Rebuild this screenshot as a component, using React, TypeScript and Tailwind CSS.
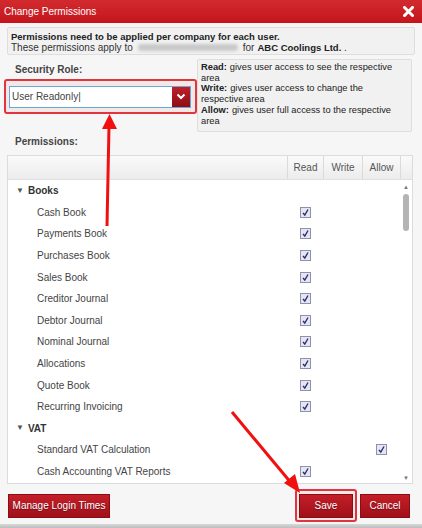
import React from "react";

const books = [
  "Cash Book",
  "Payments Book",
  "Purchases Book",
  "Sales Book",
  "Creditor Journal",
  "Debtor Journal",
  "Nominal Journal",
  "Allocations",
  "Quote Book",
  "Recurring Invoicing",
];

function Check() {
  return (
    <span className="inline-flex w-[11px] h-[11px] border border-[#8f8fae] bg-[#e6e6f2] items-center justify-center">
      <svg width="9" height="9" viewBox="0 0 9 9">
        <path d="M2 5 L3.8 7 L7 1.5" stroke="#2a2f6e" strokeWidth="1.4" fill="none" />
      </svg>
    </span>
  );
}

function Row({ label, col }: { label: string; col: "read" | "allow" }) {
  return (
    <div className="flex h-[21.6px] items-center">
      <div className="w-[279px] pl-[29px] text-[10px] text-[#444]">{label}</div>
      <div className="w-[36px] flex justify-center">{col === "read" ? <Check /> : null}</div>
      <div className="w-[39px]" />
      <div className="w-[38px] flex justify-center">{col === "allow" ? <Check /> : null}</div>
    </div>
  );
}

function Group({ label }: { label: string }) {
  return (
    <div className="flex h-[21.6px] items-center pl-[8px] text-[10px] font-bold text-[#333]">
      <span className="text-[8px] mr-[4px] text-[#555]">▼</span>
      {label}
    </div>
  );
}

function Desc({ term, first, second }: { term: string; first: string; second: string }) {
  return (
    <>
      <div className="flex gap-[3px]">
        <b>{term}</b>
        <span>{first}</span>
      </div>
      <div>{second}</div>
    </>
  );
}

export default function App() {
  return (
    <div className="relative w-[422px] h-[528px] overflow-hidden bg-[#f6f6f6] font-['Liberation_Sans']">
      {/* Header */}
      <div className="h-[23px] bg-gradient-to-b from-[#d12a2e] to-[#c4141b] flex items-center justify-between pl-[4px] pr-[8px]">
        <span className="text-white text-[10px]">Change Permissions</span>
        <svg width="11" height="11" viewBox="0 0 11 11">
          <path d="M1.5 1.5 L9.5 9.5 M9.5 1.5 L1.5 9.5" stroke="white" strokeWidth="3" strokeLinecap="square" />
        </svg>
      </div>

      <div className="px-[7px] pt-[4px]">
        {/* info box */}
        <div className="h-[28px] border border-[#dedede] bg-[#f1f1f1] rounded-[2px] px-[3px] pt-[3px] text-[10px] leading-[11px] text-[#222]">
          <div className="font-bold text-[9.5px]">Permissions need to be applied per company for each user.</div>
          <div className="text-[#333] flex items-center">
            These permissions apply to
            <span className="inline-block w-[100px] h-[7px] mx-[5px] bg-[#c9c9c9] blur-[1.5px] rounded" />
            for <b className="ml-[3px] text-[#222] text-[9.5px]">ABC Coolings Ltd.</b>&nbsp;.
          </div>
        </div>

        {/* Role + description */}
        <div className="flex mt-[4px]">
          <div className="w-[190px]">
            <div className="pl-[8px] pt-[4px] text-[10px] leading-[13px] font-bold text-[#444]">Security Role:</div>
            <div className="mt-[3px] -ml-[3px] w-[193px] h-[35px] border-2 border-[#e0353e] rounded-[3px] bg-[#f3e8e8] flex items-center pl-[3px]">
              <div className="w-[182px] h-[22px] border border-[#6aa8d8] bg-white flex items-center">
                <span className="flex-1 pl-[2px] text-[10px] text-[#444]">User Readonly|</span>
                <div className="w-[18px] h-[20px] bg-gradient-to-b from-[#c0202a] to-[#8e0d14] flex items-center justify-center">
                  <svg width="10" height="7" viewBox="0 0 10 7">
                    <path d="M1.5 1.5 L5 5 L8.5 1.5" stroke="white" strokeWidth="2" fill="none" />
                  </svg>
                </div>
              </div>
            </div>
          </div>
          <div className="w-[215px] h-[73px] border border-[#dedede] bg-[#f1f1f1] rounded-[2px] pl-[3px] pt-[2px] text-[9.3px] leading-[10.7px] text-[#222]">
            <Desc term="Read:" first="gives user access to see the respective" second="area" />
            <Desc term="Write:" first="gives user access to change the" second="respective area" />
            <Desc term="Allow:" first="gives user full access to the respective" second="area" />
          </div>
        </div>

        <div className="pl-[8px] mt-[3px] text-[10px] leading-[13px] font-bold text-[#444]">Permissions:</div>

        {/* Table */}
        <div className="mt-[7px] w-[406px] h-[329px] border border-[#dcdcdc] bg-white overflow-hidden">
          <div className="h-[24px] flex bg-gradient-to-b from-[#fafafa] to-[#ececec] border-b border-[#e0e0e0] text-[10px] text-[#555]">
            <div className="w-[279px]" />
            <div className="w-[36px] border-l border-[#dadada] flex items-center justify-center">Read</div>
            <div className="w-[39px] border-l border-[#dadada] flex items-center justify-center">Write</div>
            <div className="w-[38px] border-l border-[#dadada] flex items-center justify-center">Allow</div>
            <div className="flex-1 border-l border-[#dadada]" />
          </div>
          <div className="flex">
            <div className="w-[392px]">
              <Group label="Books" />
              {books.map((b) => (
                <Row key={b} label={b} col="read" />
              ))}
              <Group label="VAT" />
              <Row label="Standard VAT Calculation" col="allow" />
              <Row label="Cash Accounting VAT Reports" col="read" />
            </div>
            <div className="flex-1 flex flex-col items-center pt-[4px] h-[303px]">
              <span className="text-[6px] leading-[6px] text-[#777]">▲</span>
              <div className="mt-[4px] w-[6px] h-[37px] rounded-[3px] bg-[#b4b4b4]" />
              <div className="flex-1" />
              <span className="text-[6px] leading-[6px] text-[#777] mb-[2px]">▼</span>
            </div>
          </div>
        </div>

        {/* Buttons */}
        <div className="mt-[5px] flex items-center">
          <button className="ml-[1px] h-[24px] w-[102px] bg-gradient-to-b from-[#c41e28] to-[#a0101a] border border-[#8c0c14] text-white text-[10px] [text-shadow:0_1px_1px_rgba(0,0,0,0.4)]">
            Manage Login Times
          </button>
          <div className="flex-1" />
          <div className="w-[62px] h-[33px] border-2 border-[#e0353e] rounded-[3px] bg-[#f3e8e8] flex items-center justify-center">
            <button className="w-[54px] h-[24px] bg-gradient-to-b from-[#c41e28] to-[#a0101a] border border-[#8c0c14] text-white text-[10px] [text-shadow:0_1px_1px_rgba(0,0,0,0.4)]">
              Save
            </button>
          </div>
          <button className="ml-[3px] mr-[5px] w-[50px] h-[24px] bg-gradient-to-b from-[#c41e28] to-[#a0101a] border border-[#8c0c14] text-white text-[10px] [text-shadow:0_1px_1px_rgba(0,0,0,0.4)]">
            Cancel
          </button>
        </div>
      </div>

      <div className="absolute left-0 right-0 bottom-0 h-[4px] bg-gradient-to-b from-[#d8d8d8] to-[#bdbdbd]" />

      {/* annotation arrows */}
      <svg className="absolute left-0 top-0 pointer-events-none" width="422" height="528">
        <line x1="107" y1="226" x2="109" y2="126" stroke="#f01010" strokeWidth="3" />
        <polygon points="109.5,114 102,129 117,129" fill="#f01010" />
        <line x1="232" y1="412" x2="292" y2="484" stroke="#f01010" strokeWidth="3" />
        <polygon points="300,493 284,483 295,474" fill="#f01010" />
      </svg>
    </div>
  );
}
